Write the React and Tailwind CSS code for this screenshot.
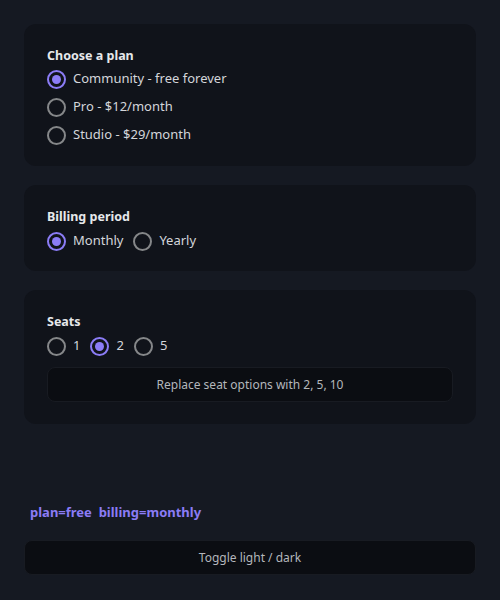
import React, { useState } from 'react';

function Radio({ checked, label, onClick }) {
  return (
    <label className="flex items-center h-7 cursor-pointer" onClick={onClick}>
      <span
        className={
          checked
            ? 'w-[19px] h-[19px] rounded-full border-2 border-[#8b7cf6] flex items-center justify-center'
            : 'w-[19px] h-[19px] rounded-full border-2 border-[#858789]'
        }
      >
        {checked && <span className="w-[9px] h-[9px] rounded-full bg-[#8b7cf6]" />}
      </span>
      <span className="ml-[7px] mr-[10px] text-[13px] text-[#d4d6da]">{label}</span>
    </label>
  );
}

function Card({ title, children, extra, tight }) {
  return (
    <div className={tight ? 'bg-[#10131a] rounded-xl pt-6 pb-4 px-[23px]' : 'bg-[#10131a] rounded-xl pt-6 pb-[17px] px-[23px]'}>
      <div className="text-[12.5px] leading-4 font-bold text-[#e6e8eb]">{title}</div>
      {children}
      {extra}
    </div>
  );
}

export default function App() {
  const [plan, setPlan] = useState('free');
  const [billing, setBilling] = useState('monthly');
  const [seats, setSeats] = useState(2);
  const [seatOptions, setSeatOptions] = useState([1, 2, 5]);

  return (
    <div
      className="min-h-[600px] bg-[#151922] px-6 pt-6"
      style={{ fontFamily: '"Noto Sans", sans-serif' }}
    >
      <div className="flex flex-col gap-[19px]">
        <Card title="Choose a plan">
          <div className="flex flex-col mt-px">
            <Radio checked={plan === 'free'} label="Community - free forever" onClick={() => setPlan('free')} />
            <Radio checked={plan === 'pro'} label="Pro - $12/month" onClick={() => setPlan('pro')} />
            <Radio checked={plan === 'studio'} label="Studio - $29/month" onClick={() => setPlan('studio')} />
          </div>
        </Card>
        <Card title="Billing period" tight>
          <div className="flex mt-[2px]">
            <Radio checked={billing === 'monthly'} label="Monthly" onClick={() => setBilling('monthly')} />
            <Radio checked={billing === 'yearly'} label="Yearly" onClick={() => setBilling('yearly')} />
          </div>
        </Card>
        <Card
          title="Seats"
          extra={
            <button
              onClick={() => setSeatOptions([2, 5, 10])}
              className="mt-[7px] mb-[5px] w-full h-[35px] rounded-lg bg-[#0b0d12] border border-[#181b22] text-[12px] text-[#b4b7bc]"
            >
              Replace seat options with 2, 5, 10
            </button>
          }
        >
          <div className="flex mt-[2px]">
            {seatOptions.map((s) => (
              <Radio key={s} checked={seats === s} label={String(s)} onClick={() => setSeats(s)} />
            ))}
          </div>
        </Card>
      </div>
      <div className="mt-[80px] pl-[6px] text-[13px] leading-4 font-bold text-[#8b7cf6] whitespace-pre">
        {`plan=${plan}  billing=${billing}`}
      </div>
      <button className="mt-[20px] w-full h-[35px] rounded-lg bg-[#0b0d12] border border-[#181b22] text-[12px] text-[#b4b7bc]">
        Toggle light / dark
      </button>
    </div>
  );
}
